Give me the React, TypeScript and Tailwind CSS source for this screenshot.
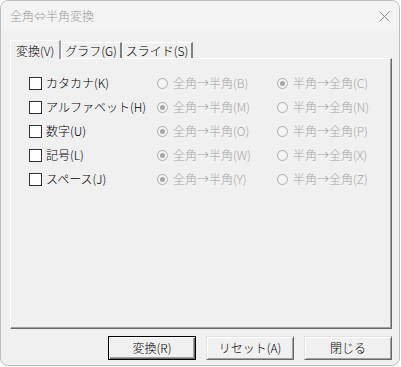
import React from "react";

const rows = [
  { label: "カタカナ(K)", a: "全角→半角(B)", b: "半角→全角(C)", first: false },
  { label: "アルファベット(H)", a: "全角→半角(M)", b: "半角→全角(N)", first: true },
  { label: "数字(U)", a: "全角→半角(O)", b: "半角→全角(P)", first: true },
  { label: "記号(L)", a: "全角→半角(W)", b: "半角→全角(X)", first: true },
  { label: "スペース(J)", a: "全角→半角(Y)", b: "半角→全角(Z)", first: true },
];

const Radio = ({ checked, label }: { checked: boolean; label: string }) => (
  <div className="flex items-center gap-[5px]">
    <span className="w-[11px] h-[11px] rounded-full border border-[#b0b0b0] bg-[#f4f4f4] flex items-center justify-center">
      {checked && <span className="w-[5px] h-[5px] rounded-full bg-[#a8a8a8]" />}
    </span>
    <span className="text-[#a6a6a6]">{label}</span>
  </div>
);

const Btn = ({ label, def }: { label: string; def?: boolean }) => (
  <button
    className={
      "w-[88px] h-[24px] bg-[#f0f0f0] text-black text-[12px] font-light leading-none border " +
      (def
        ? "border-black shadow-[inset_1px_1px_0_#ffffff,inset_-1px_-1px_0_#696969,inset_-2px_-2px_0_#a0a0a0]"
        : "border-t-[#e3e3e3] border-l-[#e3e3e3] border-r-[#696969] border-b-[#696969] shadow-[inset_1px_1px_0_#ffffff,inset_-1px_-1px_0_#a0a0a0]")
    }
  >
    {label}
  </button>
);

export default function App() {
  return (
    <div
      className="w-[401px] h-[367px] bg-white"
      style={{ fontFamily: '"Noto Sans CJK JP", "Noto Sans", sans-serif' }}
    >
      <div className="w-[400px] h-[366px] rounded-[8px] border border-[#bdbdbd] bg-[#f0f0f0] overflow-hidden flex flex-col text-[12px] font-light leading-none">
        {/* title bar */}
        <div className="h-[30px] bg-[#f3f3f3] flex items-center justify-between pl-[9px] pr-[9px]">
          <span className="text-[#9a9a9a]">全角⇔半角変換</span>
          <svg width="11" height="11" viewBox="0 0 11 11">
            <path d="M0.5 0.5 L10.5 10.5 M10.5 0.5 L0.5 10.5" stroke="#8a8a8a" strokeWidth="1" />
          </svg>
        </div>

        <div className="flex-1 flex flex-col pl-[9px] pr-[7px] pt-[9px]">
          {/* tabs */}
          <div className="h-[18px] flex items-end relative z-10">
            <div className="h-[19px] -mb-[1px] px-[5px] pt-[4px] bg-[#f0f0f0] border-t border-l border-white border-r-2 border-r-[#a0a0a0] text-black">
              変換(V)
            </div>
            <div className="h-[16px] px-[3px] pt-[2px] border-t border-l border-white border-r-2 border-r-[#808080] text-black">
              グラフ(G)
            </div>
            <div className="h-[16px] px-[3px] pt-[2px] border-t border-l border-white border-r-2 border-r-[#808080] text-black">
              スライド(S)
            </div>
          </div>

          {/* panel */}
          <div className="h-[271px] border-t border-l border-white border-r border-b border-r-[#696969] border-b-[#696969] shadow-[inset_-1px_-1px_0_#a0a0a0] pl-[18px] pt-[12px]">
            <div className="flex flex-col">
              {rows.map((r) => (
                <div key={r.label} className="h-[24px] grid grid-cols-[128px_120px_1fr] items-center">
                  <div className="flex items-center gap-[4px]">
                    <span className="w-[13px] h-[13px] border border-[#333333] bg-white" />
                    <span className="text-black">{r.label}</span>
                  </div>
                  <Radio checked={r.first} label={r.a} />
                  <Radio checked={!r.first} label={r.b} />
                </div>
              ))}
            </div>
          </div>

          {/* buttons */}
          <div className="flex justify-end gap-[10px] mt-[7px]">
            <Btn label="変換(R)" def />
            <Btn label="リセット(A)" />
            <Btn label="閉じる" />
          </div>
        </div>
      </div>
    </div>
  );
}
